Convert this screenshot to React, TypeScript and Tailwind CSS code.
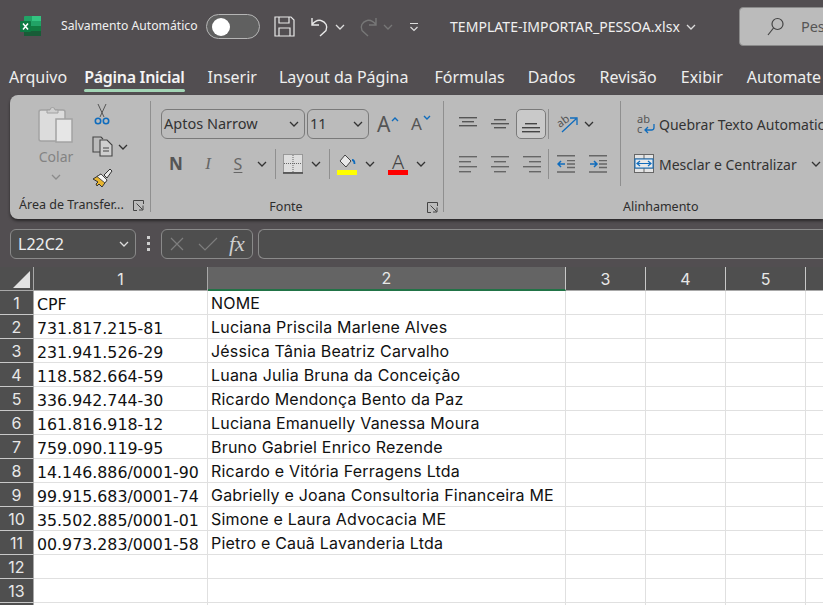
import type { ReactNode } from "react";

const sans = "font-['Noto_Sans','Open_Sans',sans-serif]";

function Chevron({ className = "", color = "#333" }: { className?: string; color?: string }) {
  return (
    <svg width="10" height="6" viewBox="0 0 10 6" className={className} fill="none" stroke={color} strokeWidth="1.3">
      <path d="M1 1l4 4 4-4" />
    </svg>
  );
}

function Launcher({ className = "" }: { className?: string }) {
  return (
    <svg width="11" height="11" viewBox="0 0 11 11" className={className} fill="none" stroke="#444" strokeWidth="1">
      <path d="M10.5 4V.5H.5v10H4" />
      <path d="M3.5 3.5l6 6M10 5.5v4.500H6" />
    </svg>
  );
}

function Lines({ widths, gap = 4, align = "left", color = "#555" }: { widths: number[]; gap?: number; align?: "left" | "center" | "right"; color?: string }) {
  const w = Math.max(...widths);
  return (
    <svg width={w} height={(widths.length - 1) * gap + 2} className="block">
      {widths.map((lw, i) => {
        const x = align === "left" ? 0 : align === "right" ? w - lw : (w - lw) / 2;
        return <rect key={i} x={x} y={i * gap} width={lw} height="1.4" fill={color} />;
      })}
    </svg>
  );
}

function Indent({ dir }: { dir: "left" | "right" }) {
  return (
    <svg width="19" height="18" viewBox="0 0 19 18" fill="none">
      <path d="M0 .7h18M0 17h18" stroke="#666" strokeWidth="1.4" />
      <path d="M10 5.700h8M10 9h8M10 12.500h8" stroke="#666" strokeWidth="1.300" />
      <path d={dir === "left" ? "M8 9H1M4 6L1 9l3 3" : "M1 9h7M5 6l3 3-3 3"} stroke="#0f6cbd" strokeWidth="1.500" />
    </svg>
  );
}

function Tab({ children, active, ml }: { children: ReactNode; active?: boolean; ml: string }) {
  return (
    <div className={`relative whitespace-nowrap ${ml} ${active ? "font-semibold tracking-[-0.3px] text-[#f4f4f4]" : "text-[#eeeeee]"}`}>
      {children}
      {active && <div className="absolute left-0 right-0 top-[24px] h-[3px] rounded-sm bg-[#a3d5b6]" />}
    </div>
  );
}

function TitleBar() {
  return (
    <div className="flex h-[53px] items-center text-[#f0f0f0]">
      <svg width="21" height="21" viewBox="0 0 21 21" className="ml-[20px] shrink-0">
        <rect x="4" y="0" width="17" height="20" rx="1" fill="#21a366" />
        <rect x="12" y="0" width="9" height="5" fill="#33c481" />
        <rect x="4" y="10" width="8" height="10" fill="#107c41" />
        <rect x="12" y="10" width="9" height="5" fill="#107c41" />
        <rect x="12" y="15" width="9" height="5" fill="#185c37" />
        <rect x="4" y="15" width="8" height="5" fill="#185c37" />
        <rect x="0" y="5" width="11" height="11" rx="1" fill="#0e7a43" />
        <path d="M3 7.500l5 6M8 7.500l-5 6" stroke="#fff" strokeWidth="1.500" />
      </svg>
      <span className="ml-[20px] w-[145px] shrink-0 whitespace-nowrap text-[12.2px]">Salvamento Automático</span>
      <div className="flex h-[25px] w-[54px] shrink-0 items-center rounded-full border border-[#b5b5b5] bg-[#606060] pl-[5px]">
        <div className="size-[18px] rounded-full bg-white" />
      </div>
      <svg width="21" height="21" viewBox="0 0 21 21" className="ml-[14px] shrink-0" fill="none" stroke="#e8e8e8" strokeWidth="1.200">
        <path d="M1 1h16l3 3v16H1z" />
        <path d="M5 1v6h10V1M5 20v-8h11v8" />
      </svg>
      <svg width="20" height="21" viewBox="0 0 20 21" className="ml-[15px] shrink-0" fill="none" stroke="#e8e8e8" strokeWidth="1.400">
        <path d="M2 2v7h7M2 8.500C5 5 8 3.500 11 4.500c5 1.500 7 6 5 10l-6 5.500" />
      </svg>
      <Chevron color="#ddd" className="ml-[5px] shrink-0" />
      <svg width="20" height="21" viewBox="0 0 20 21" className="ml-[13px] shrink-0" fill="none" stroke="#777" strokeWidth="1.400">
        <path d="M18 2v7h-7M18 8.500C15 5 12 3.500 9 4.500c-5 1.500-7 6-5 10l6 5.500" />
      </svg>
      <Chevron color="#777" className="ml-[5px] shrink-0" />
      <svg width="10" height="10" viewBox="0 0 10 10" className="ml-[16px] shrink-0" fill="none" stroke="#ddd" strokeWidth="1.200">
        <path d="M1 1.500h8M1.500 5l3.500 3.500L8.500 5" />
      </svg>
      <span className="ml-[31px] shrink-0 whitespace-nowrap text-[14px] tracking-[0.05px]">TEMPLATE-IMPORTAR_PESSOA.xlsx</span>
      <Chevron color="#ddd" className="ml-[6px] shrink-0" />
      <div className="ml-[43px] flex h-[39px] w-[120px] shrink-0 items-center rounded border border-[#8a8a8a] bg-[#bbbbbb] pl-[27px] text-[#555]">
        <svg width="17" height="19" viewBox="0 0 17 19" fill="none" stroke="#444" strokeWidth="1.200" className="shrink-0">
          <circle cx="10.500" cy="7" r="5.500" />
          <path d="M6.500 11L1 18" />
        </svg>
        <span className="ml-[17px] text-[14.5px]">Pesquisar</span>
      </div>
    </div>
  );
}

function TabsBar() {
  return (
    <div className="flex h-[42px] items-center pl-[9px] pt-[6px] text-[16px]">
      <Tab ml="">Arquivo</Tab>
      <Tab ml="ml-[17px]" active>Página Inicial</Tab>
      <Tab ml="ml-[23px]">Inserir</Tab>
      <Tab ml="ml-[22px]">Layout da Página</Tab>
      <Tab ml="ml-[26px]">Fórmulas</Tab>
      <Tab ml="ml-[23px]">Dados</Tab>
      <Tab ml="ml-[24px]">Revisão</Tab>
      <Tab ml="ml-[24px]">Exibir</Tab>
      <Tab ml="ml-[24px]">Automate</Tab>
    </div>
  );
}

function ClipboardGroup() {
  return (
    <div className="relative flex h-[111px] w-[141px] shrink-0 flex-col border-r border-[#8f8f8f]">
      <div className="flex h-[95px]">
        <div className="ml-[22px] mt-[5px] flex w-[48px] flex-col items-center">
          <svg width="36" height="37" viewBox="0 0 36 37">
            <rect x="1" y="4" width="26" height="31" rx="2" fill="#dcdcdc" stroke="#a3a3a3" strokeWidth="1.500" />
            <path d="M9 6V4h3a2.500 2.500 0 015 0h3v3H9z" fill="#cfcfcf" stroke="#a0a0a0" />
            <rect x="18" y="13" width="16" height="23" fill="#e6e6e6" stroke="#a3a3a3" strokeWidth="1.500" />
          </svg>
          <span className="mt-[4px] text-[14px] leading-[20px] text-[#838383]">Colar</span>
          <Chevron color="#8b8b8b" className="mt-[7px]" />
        </div>
        <div className="ml-[8px] flex flex-col">
          <svg width="16" height="22" viewBox="0 0 16 22" fill="none" className="ml-[6px] mt-[2px]">
            <path d="M4 1l6 13M12 1L6 14" stroke="#555" strokeWidth="1" />
            <circle cx="4" cy="18" r="2.700" stroke="#0f6cbd" strokeWidth="1.600" />
            <circle cx="12" cy="18" r="2.700" stroke="#0f6cbd" strokeWidth="1.600" />
          </svg>
          <div className="mt-[11px] flex items-center">
            <svg width="21" height="21" viewBox="0 0 21 21" fill="none" stroke="#444" strokeWidth="1.100" className="ml-[4px]">
              <path d="M8 16H1V1h8l2 2" />
              <path d="M8 4h7l5 5v11H8z" fill="#cfcfcf" />
              <path d="M11 12h6M11 15h6" />
            </svg>
            <Chevron className="ml-[5px]" />
          </div>
          <svg width="21" height="20" viewBox="0 0 21 20" className="ml-[4px] mt-[11px]">
            <path d="M1 11l8-5 6 6-5 7-3-3-2 2-1-2 2-2z" fill="#e8b52f" stroke="#333" strokeWidth="1" />
            <path d="M5 8.500L9 6l6 6-2 3z" fill="#f5f5f5" stroke="#333" strokeWidth="0.800" />
            <path d="M12 7l6-6 2 2-5 7z" fill="#e8e8e8" stroke="#333" strokeWidth="1" />
          </svg>
        </div>
      </div>
      <div className="-mb-[5px] flex items-center pl-[9px]">
        <span className="whitespace-nowrap text-[12.5px] text-[#2d2d2d]">Área de Transfer...</span>
        <Launcher className="ml-[9px]" />
      </div>
    </div>
  );
}

function Select({ label, width }: { label: string; width: string }) {
  return (
    <div className={`flex h-[30px] items-center justify-between rounded-[6px] border border-[#7a7a7a] pl-[2px] pr-[5px] text-[14.5px] text-[#333] ${width}`}>
      <span className="whitespace-nowrap">{label}</span>
      <Chevron />
    </div>
  );
}

function FontGroup() {
  return (
    <div className="flex h-[111px] w-[293px] shrink-0 flex-col border-r border-[#8f8f8f]">
      <div className="ml-[10px] mt-[8px] flex items-center">
        <Select label="Aptos Narrow" width="w-[144px]" />
        <div className="w-[2px]" />
        <Select label="11" width="w-[62px]" />
        <div className="relative ml-[8px] w-[20px] text-[21px] leading-[24px] text-[#555]">
          A
          <svg width="8" height="5" viewBox="0 0 8 5" className="absolute -right-[2px] top-[5px]" fill="none" stroke="#0f6cbd" strokeWidth="1.400"><path d="M1 4l3-3 3 3" /></svg>
        </div>
        <div className="relative ml-[14px] w-[18px] text-[17px] leading-[24px] text-[#555]">
          A
          <svg width="8" height="5" viewBox="0 0 8 5" className="absolute -right-[2px] top-[3px]" fill="none" stroke="#0f6cbd" strokeWidth="1.400"><path d="M1 1l3 3 3-3" /></svg>
        </div>
      </div>
      <div className="mt-[10px] flex h-[30px] items-center">
        <span className="ml-[18px] w-[14px] text-center text-[17px] font-bold text-[#555]">N</span>
        <span className="ml-[18px] w-[14px] text-center font-['Liberation_Serif',serif] text-[17px] italic text-[#666]">I</span>
        <span className="ml-[17px] w-[12px] text-center text-[16px] text-[#666] underline underline-offset-2">S</span>
        <Chevron className="ml-[13px]" />
        <div className="ml-[8px] h-[30px] w-px bg-[#8f8f8f]" />
        <svg width="20" height="20" viewBox="0 0 20 20" className="ml-[7px]" fill="none">
          <rect x="0.500" y="0.500" width="19" height="18" fill="#dedede" stroke="#666" strokeDasharray="1 1" />
          <path d="M10 1v17M1 9.500h18" stroke="#666" strokeDasharray="1 1" />
          <path d="M0 19h20" stroke="#444" strokeWidth="1.500" />
        </svg>
        <Chevron className="ml-[8px]" />
        <div className="ml-[8px] h-[30px] w-px bg-[#8f8f8f]" />
        <div className="ml-[7px] flex w-[20px] flex-col items-center">
          <svg width="18" height="15" viewBox="0 0 18 15" fill="none">
            <path d="M7 1l6 6-5 6-6-6z" fill="#e8e8e8" stroke="#444" strokeWidth="1" />
            <path d="M14 6c2 0 2.500 2 2.500 4" stroke="#0f6cbd" strokeWidth="1.800" />
          </svg>
          <div className="mt-[1px] h-[5px] w-[20px] bg-[#ffff00]" />
        </div>
        <Chevron className="ml-[8px]" />
        <div className="ml-[13px] flex w-[20px] flex-col items-center">
          <span className="h-[15px] text-[20px] font-light leading-[15px] text-[#444]">A</span>
          <div className="mt-[1px] h-[5px] w-[20px] bg-[#ff0000]" />
        </div>
        <Chevron className="ml-[8px]" />
      </div>
      <div className="-mb-[5px] mt-auto flex items-center">
        <span className="ml-[118px] w-[34px] text-center text-[12.5px] text-[#2d2d2d]">Fonte</span>
        <Launcher className="ml-[124px]" />
      </div>
    </div>
  );
}

function AlignControls() {
  return (
    <div className="flex h-[85px] w-[177px] shrink-0 flex-col border-r border-[#8f8f8f]">
      <div className="mt-[8px] flex h-[30px] items-center">
        <div className="ml-[15px] -mt-[4px]"><Lines widths={[18, 12, 18]} align="center" /></div>
        <div className="ml-[14px]"><Lines widths={[12, 18, 12]} align="center" /></div>
        <div className="ml-[7px] flex h-[30px] w-[30px] items-end justify-center rounded-[5px] border border-[#7a7a7a] bg-[#c9c9c9] pb-[5px]">
          <Lines widths={[12, 18, 18]} align="center" color="#444" />
        </div>
        <div className="ml-[2px] h-[30px] w-px bg-[#8f8f8f]" />
        <div className="relative ml-[7px] h-[20px] w-[22px]">
          <span className="absolute left-0 top-[1px] -rotate-[35deg] text-[11px] leading-[11px] text-[#555]">ab</span>
          <svg width="22" height="20" viewBox="0 0 22 20" className="absolute inset-0" fill="none">
            <path d="M6 18L20 5M14 4h7v7" stroke="#0f6cbd" strokeWidth="1.300" />
          </svg>
        </div>
        <Chevron className="ml-[6px]" />
      </div>
      <div className="mt-[10px] flex h-[30px] items-center">
        <div className="ml-[15px]"><Lines widths={[18, 12, 18, 12]} gap={5} align="left" color="#666" /></div>
        <div className="ml-[14px]"><Lines widths={[18, 12, 18, 12]} gap={5} align="center" color="#666" /></div>
        <div className="ml-[14px]"><Lines widths={[18, 12, 18, 12]} gap={5} align="right" color="#666" /></div>
        <div className="ml-[7px] h-[30px] w-px bg-[#8f8f8f]" />
        <div className="ml-[8px]"><Indent dir="left" /></div>
        <div className="ml-[13px]"><Indent dir="right" /></div>
      </div>
    </div>
  );
}

function WrapControls() {
  return (
    <div className="flex flex-col pl-[13px] text-[14px] text-[#333]">
      <div className="mt-[8px] flex h-[30px] items-center whitespace-nowrap">
        <div className="relative ml-[3px] h-[20px] w-[19px] shrink-0">
          <span className="absolute left-0 top-0 whitespace-pre text-[11px] leading-[10px] text-[#555]">{"ab\nc"}</span>
          <svg width="19" height="20" viewBox="0 0 19 20" className="absolute inset-0" fill="none">
            <path d="M17 10v3.500a2.500 2.500 0 01-2.500 2.500H8M11 13l-3 3 3 3" stroke="#0f6cbd" strokeWidth="1.300" />
          </svg>
        </div>
        <span className="ml-[3px]">Quebrar Texto Automaticamente</span>
      </div>
      <div className="mt-[10px] flex h-[30px] items-center whitespace-nowrap">
        <svg width="20" height="20" viewBox="0 0 20 20" className="shrink-0" fill="none">
          <rect x="0.500" y="0.500" width="19" height="18" fill="#e4e4e4" stroke="#666" />
          <path d="M1 5h18M1 14h18M10 1v4M10 14v5" stroke="#666" />
          <rect x="1" y="5" width="18" height="9" fill="#e8e8e8" stroke="#0f6cbd" />
          <path d="M3 9.500h14M6 7L3 9.500 6 12M14 7l3 2.500L14 12" stroke="#0f6cbd" strokeWidth="1.200" />
        </svg>
        <span className="ml-[5px]">Mesclar e Centralizar</span>
        <Chevron className="ml-[14px]" />
      </div>
    </div>
  );
}

function AlignGroup() {
  return (
    <div className="flex h-[111px] min-w-0 flex-1 flex-col">
      <div className="flex">
        <AlignControls />
        <WrapControls />
      </div>
      <div className="-mb-[5px] mt-auto whitespace-nowrap pl-[179px] text-[12.5px] text-[#2d2d2d]">Alinhamento</div>
    </div>
  );
}

function Ribbon() {
  return (
    <div className="ml-[10px] flex h-[124px] overflow-hidden rounded-l-[8px] bg-[#bbbbbb] pt-[6px] shadow-[0_2px_3px_rgba(0,0,0,0.5)]">
      <ClipboardGroup />
      <FontGroup />
      <AlignGroup />
    </div>
  );
}

function FormulaBar() {
  return (
    <div className="flex h-[48px] items-center pl-[10px] pt-[1px]">
      <div className="flex h-[30px] w-[126px] shrink-0 items-center justify-between rounded-[6px] border border-[#8a8a8a] bg-[#4e4e4e] pl-[7px] pr-[6px] text-[16px] text-[#eeeeee]">
        L22C2
        <Chevron color="#ddd" />
      </div>
      <div className="ml-[11px] flex w-[3px] shrink-0 flex-col gap-[3px]">
        <div className="size-[3px] bg-[#cfcfcf]" />
        <div className="size-[3px] bg-[#cfcfcf]" />
        <div className="size-[3px] bg-[#cfcfcf]" />
      </div>
      <div className="ml-[11px] flex h-[30px] w-[92px] shrink-0 items-center rounded-[6px] border border-[#8a8a8a] bg-[#4e4e4e]">
        <svg width="16" height="16" viewBox="0 0 16 16" className="ml-[7px]" fill="none" stroke="#7e7e7e" strokeWidth="1.200"><path d="M2 2l12 12M14 2L2 14" /></svg>
        <svg width="20" height="16" viewBox="0 0 20 16" className="ml-[13px]" fill="none" stroke="#7e7e7e" strokeWidth="1.200"><path d="M1 8l6 6L19 2" /></svg>
        <span className="ml-[11px] font-['Liberation_Serif',serif] text-[22px] italic leading-none text-[#cfcfcf]">fx</span>
      </div>
      <div className="ml-[5px] h-[30px] flex-1 rounded-l-[6px] border border-r-0 border-[#8a8a8a] bg-[#4e4e4e]" />
    </div>
  );
}

const rows = [
  ["CPF", "NOME"],
  ["731.817.215-81", "Luciana Priscila Marlene Alves"],
  ["231.941.526-29", "Jéssica Tânia Beatriz Carvalho"],
  ["118.582.664-59", "Luana Julia Bruna da Conceição"],
  ["336.942.744-30", "Ricardo Mendonça Bento da Paz"],
  ["161.816.918-12", "Luciana Emanuelly Vanessa Moura"],
  ["759.090.119-95", "Bruno Gabriel Enrico Rezende"],
  ["14.146.886/0001-90", "Ricardo e Vitória Ferragens Ltda"],
  ["99.915.683/0001-74", "Gabrielly e Joana Consultoria Financeira ME"],
  ["35.502.885/0001-01", "Simone e Laura Advocacia ME"],
  ["00.973.283/0001-58", "Pietro e Cauã Lavanderia Ltda"],
  ["", ""],
  ["", ""],
  ["", ""],
];

function Sheet() {
  return (
    <div className="flex flex-col font-['Inter',sans-serif]">
      <div className="flex h-[24px] bg-[#4f4f4f] text-[16px] text-[#e8e8e8]">
        <div className="flex w-[34px] shrink-0 items-end justify-end border-r border-b border-[#a8a8a8] pb-[2px] pr-[3px]">
          <div className="size-[17px] bg-[#e2e2e2] [clip-path:polygon(100%_0,100%_100%,0_100%)]" />
        </div>
        <div className="flex w-[174px] shrink-0 items-center justify-center border-r border-b border-[#a8a8a8]">1</div>
        <div className="flex w-[358px] shrink-0 items-center justify-center border-r border-b-2 border-r-[#c8c8c8] border-b-[#217346] bg-[#646464]">2</div>
        <div className="flex w-[80px] shrink-0 items-center justify-center border-r border-b border-r-[#c8c8c8] border-b-[#a8a8a8]">3</div>
        <div className="flex w-[80px] shrink-0 items-center justify-center border-r border-b border-r-[#c8c8c8] border-b-[#a8a8a8]">4</div>
        <div className="flex w-[80px] shrink-0 items-center justify-center border-r border-b border-r-[#c8c8c8] border-b-[#a8a8a8]">5</div>
        <div className="flex-1 border-b border-[#a8a8a8]" />
      </div>
      {rows.map((row, i) => (
        <div key={i} className="flex h-[24px] text-[16px] tracking-[0.2px] text-[#111]">
          <div className="flex w-[34px] shrink-0 items-center justify-center border-r border-b border-r-[#a8a8a8] border-b-[#c8c8c8] bg-[#4f4f4f] tracking-normal text-[#e8e8e8]">{i + 1}</div>
          <div className="flex w-[174px] shrink-0 items-center whitespace-nowrap border-r border-b border-[#e0e0e0] bg-white pl-[3px] pt-[4px] font-['DejaVu_Sans',sans-serif] text-[15.8px] leading-[18px] tracking-normal">{row[0]}</div>
          <div className="flex w-[358px] shrink-0 items-center whitespace-nowrap border-r border-b border-[#e0e0e0] bg-white pl-[3px] pt-[1px]">{row[1]}</div>
          <div className="w-[80px] shrink-0 border-r border-b border-[#e0e0e0] bg-white" />
          <div className="w-[80px] shrink-0 border-r border-b border-[#e0e0e0] bg-white" />
          <div className="w-[80px] shrink-0 border-r border-b border-[#e0e0e0] bg-white" />
          <div className="flex-1 border-b border-[#e0e0e0] bg-white" />
        </div>
      ))}
    </div>
  );
}

export default function App() {
  return (
    <div className={`h-[605px] w-[823px] overflow-hidden bg-[#524e51] ${sans}`}>
      <TitleBar />
      <TabsBar />
      <Ribbon />
      <FormulaBar />
      <Sheet />
    </div>
  );
}
